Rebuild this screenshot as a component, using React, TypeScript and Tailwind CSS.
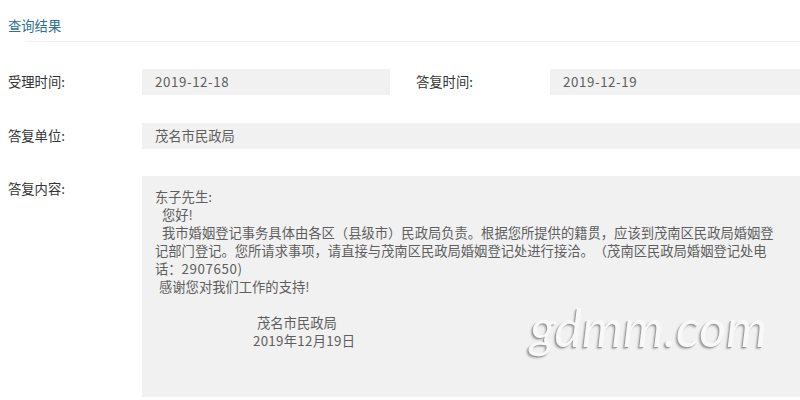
const font = "font-['Microsoft_YaHei','Noto_Sans_CJK_SC',sans-serif]";

function Label({ children, className = "" }: { children: React.ReactNode; className?: string }) {
  return (
    <div className={`h-[26px] flex items-center text-[13.3px] text-[#333] ${className}`}>
      {children}
    </div>
  );
}

function Field({ children, className = "" }: { children: React.ReactNode; className?: string }) {
  return (
    <div className={`h-[26px] flex items-center bg-[#f1f1f1] pl-[13px] text-[13.3px] text-[#5e5e5e] ${className}`}>
      {children}
    </div>
  );
}

export default function App() {
  return (
    <div className={`w-[800px] h-[400px] bg-white overflow-hidden [text-spacing-trim:space-all] ${font}`}>
      {/* Header */}
      <div className="h-[42px] flex flex-col">
        <div className="pl-2 pt-[16px] text-[13.3px] leading-[20px] text-[#2f7093]">查询结果</div>
        <div className="mt-auto ml-[25px] border-b border-[#f0f0f0]" />
      </div>

      {/* 受理 / 答复时间 */}
      <div className="flex mt-[27px]">
        <Label className="w-[142px] pl-2">受理时间:</Label>
        <Field className="w-[248px] tracking-[0.6px]">2019-12-18</Field>
        <Label className="w-[134px] ml-[26px]">答复时间:</Label>
        <Field className="flex-1 tracking-[0.6px]">2019-12-19</Field>
      </div>

      {/* 答复单位 */}
      <div className="flex mt-[28px]">
        <Label className="w-[142px] pl-2">答复单位:</Label>
        <Field className="flex-1">茂名市民政局</Field>
      </div>

      {/* 答复内容 */}
      <div className="flex mt-[27px]">
        <Label className="w-[142px] pl-2 self-start">答复内容:</Label>
        <div className="relative flex-1 h-[221px] bg-[#f1f1f1] pl-[13px] pt-[12px] text-[13.3px] leading-[18px] text-[#5e5e5e] whitespace-nowrap">
          <div>东子先生:</div>
          <div className="pl-[7px]">您好!</div>
          <div className="pl-[7px]">我市婚姻登记事务具体由各区（县级市）民政局负责。根据您所提供的籍贯，应该到茂南区民政局婚姻登</div>
          <div>记部门登记。您所请求事项，请直接与茂南区民政局婚姻登记处进行接洽。（茂南区民政局婚姻登记处电</div>
          <div>话：<span className="tracking-[0.6px]">2907650)</span></div>
          <div className="pl-[4px]">感谢您对我们工作的支持!</div>
          <div className="h-[18px]" />
          <div className="pl-[102px]">茂名市民政局</div>
          <div className="pl-[98px] tracking-[0.3px]">2019年12月19日</div>

          {/* watermark */}
          <div className="absolute left-[388px] top-[125px] font-['Lato',sans-serif] italic font-normal text-[52px] leading-none text-[#f8f8f8] [text-shadow:-1px_1px_0_#9a9a9a,-2px_2px_2px_rgba(0,0,0,0.25)]">
            gdmm.com
          </div>
        </div>
      </div>
    </div>
  );
}
